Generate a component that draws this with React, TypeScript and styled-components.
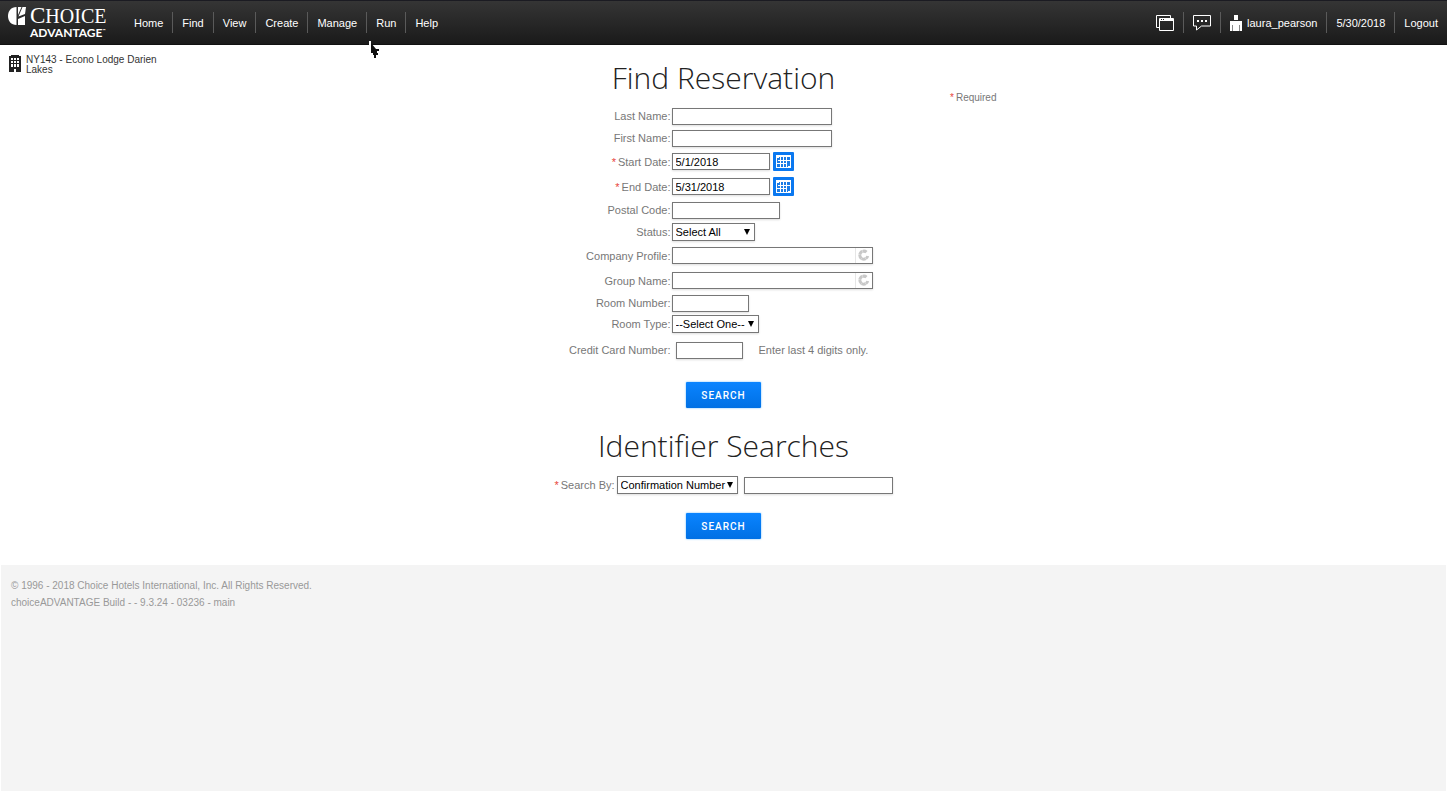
import React from "react";
import styled, { createGlobalStyle } from "styled-components";

const GlobalStyle = createGlobalStyle`
  * { box-sizing: border-box; }
  body {
    margin: 0;
    background: #fff;
    color: #777;
    font-family: "Liberation Sans", Arial, sans-serif;
    font-size: 11px;
    line-height: 14px;
  }
  input, select, button { font-family: inherit; }
`;

const Page = styled.div`
  display: flex;
  flex-direction: column;
  min-height: 100vh;
  position: relative;
`;

const Header = styled.header`
  display: flex;
  align-items: center;
  height: 45px;
  padding: 0 9px 0 8px;
  background: linear-gradient(#353535, #1a1a1a);
  border-top: 1px solid #1b1b22;
  border-bottom: 1px solid #111;
`;

const Logo = styled.a`
  display: flex;
  width: 117px;
  height: 34px;
  gap: 4px;
  color: #fff;
  text-decoration: none;

  svg { margin-top: 1px; }
`;

const LogoWords = styled.span`
  display: flex;
  flex-direction: column;
`;

const LogoTop = styled.span`
  display: block;
  font-family: "Liberation Serif", serif;
  font-size: 20px;
  line-height: 20px;

  &::first-letter { font-size: 23px; }
`;

const LogoBottom = styled.span`
  display: block;
  font-family: Lato, sans-serif;
  font-weight: 700;
  font-size: 12px;
  line-height: 14px;
  white-space: nowrap;

  sup {
    font-size: 4px;
    line-height: 4px;
    vertical-align: 5px;
  }
`;

const NavGroup = styled.nav`
  display: flex;
  align-items: center;
`;

const UserGroup = styled(NavGroup)`
  margin-left: auto;
`;

const NavLink = styled.a`
  display: flex;
  align-items: center;
  gap: 5px;
  height: 21px;
  padding: 0 9px;
  border-left: 1px solid #5a5a5a;
  color: #fff;
  text-decoration: none;
  white-space: nowrap;

  &:first-child { border-left: 0; }
  ${UserGroup} &:last-child { padding-right: 0; }
`;

const Content = styled.div`
  display: grid;
  grid-template-columns: 1fr minmax(0, 546px) 1fr;
`;

const Property = styled.div`
  display: flex;
  align-items: flex-start;
  gap: 5px;
  max-width: 170px;
  padding: 10px 0 0 9px;
  color: #333;
  font-size: 10px;
  line-height: 10px;

  svg { flex: none; }
`;

const Main = styled.main`
  display: flex;
  flex-direction: column;
  padding: 16px 0 26px;
`;

const Title = styled.h1`
  margin: 0;
  color: #222;
  font-family: "Open Sans", sans-serif;
  font-weight: 300;
  font-size: 30px;
  line-height: 34px;
  text-align: center;
`;

const Form = styled.form`
  display: flex;
  flex-direction: column;
`;

const Required = styled.p`
  margin: -4px 0 0;
  height: 14px;
  font-size: 10px;
  text-align: right;
`;

const Star = styled.span`
  margin-right: 2px;
  color: #e8453c;
`;

const Row = styled.div<{ $height: number }>`
  display: flex;
  align-items: center;
  height: ${(p) => p.$height}px;
`;

const Label = styled.label`
  width: 221px;
  padding-right: 1px;
  text-align: right;
`;

const TextBox = styled.input<{ $width: number; $indent?: boolean }>`
  width: ${(p) => p.$width}px;
  height: 17px;
  margin: 0 0 0 ${(p) => (p.$indent ? 4 : 0)}px;
  padding: 0 3px;
  border: 1px solid #777;
  background: #fff;
  color: #000;
  font-size: 11px;
  box-shadow: 0 1px 2px #ddd;
`;

const SelectWrap = styled.span<{ $width: number }>`
  position: relative;
  display: inline-flex;
  width: ${(p) => p.$width}px;

  svg {
    position: absolute;
    top: 6px;
    right: 5px;
    pointer-events: none;
  }
`;

const Select = styled.select`
  appearance: none;
  width: 100%;
  height: 18px;
  margin: 0;
  padding: 0 3px;
  border: 1px solid #777;
  border-radius: 0;
  background: #fff;
  color: #000;
  font-size: 11px;
  box-shadow: 0 1px 2px #ddd;
`;

const LookupWrap = styled.span`
  position: relative;
  display: inline-flex;

  svg {
    position: absolute;
    top: 1px;
    right: 1px;
  }
`;

const CalendarButton = styled.button`
  display: flex;
  margin: 0 0 0 3px;
  padding: 0;
  border: 0;
  background: none;
`;

const Hint = styled.span`
  margin-left: 16px;
`;

const SearchButton = styled.button`
  align-self: center;
  width: 75px;
  height: 26px;
  padding: 0;
  border: 0;
  border-radius: 1px;
  background: linear-gradient(#0a84ff, #0070e4);
  box-shadow: 0 0 2px #5ab4ff;
  color: #fff;
  font-family: Roboto, sans-serif;
  font-weight: 500;
  font-size: 10px;
  letter-spacing: 1px;

  ${Row} + & { margin: 17px 0 21px; }
`;

const IdentifierRow = styled.div`
  display: flex;
  align-items: center;
  justify-content: center;
  height: 20px;
  margin: 12px 0 18px;
  gap: 2px;
`;

const Footer = styled.footer`
  flex: 1;
  margin: 0 1px;
  padding: 12px 10px;
  background: #f4f4f4;
  color: #999;
  font-size: 10px;
  line-height: 17px;

  p { margin: 0; }
`;

const Pointer = styled.svg`
  position: absolute;
  left: 369px;
  top: 41px;
`;

const LogoMark = () => (
  <svg width="18" height="19" viewBox="0 0 18 19" fill="#fff" aria-hidden="true">
    <path d="M8.500 0v18C3 18 0 14 0 9S3 0 8.500 0z" />
    <path d="M10 0h3.500L10 8z" />
    <path d="M14.500 0H18l-1 7-6.500 2.500z" />
    <path d="M17 9v9h-7v-6z" />
  </svg>
);

const WindowsIcon = () => (
  <svg width="18" height="16" viewBox="0 0 18 16" fill="none" stroke="#fff" aria-hidden="true">
    <path d="M3.500 12.500h-3v-12h14v3" />
    <path d="M3.500 3.500h14v12h-14z" />
    <path d="M4 5h13" strokeWidth="2" />
    <path d="M5 4.500h1M7 4.500h1" stroke="#222" />
  </svg>
);

const ChatIcon = () => (
  <svg width="18" height="16" viewBox="0 0 18 16" fill="none" stroke="#fff" aria-hidden="true">
    <path d="M.5 .5h17v10.500H8.500L3.500 15v-4h-3z" />
    <path d="M4 6h2M8 6h2M12 6h2" strokeWidth="2" />
  </svg>
);

const PersonIcon = () => (
  <svg width="12" height="16" viewBox="0 0 12 16" fill="#fff" aria-hidden="true">
    <path d="M4 0h4v5H4zM0 6h12v10H0z" />
    <path d="M2.500 10v6M9.500 10v6" stroke="#888" />
  </svg>
);

const BuildingIcon = () => (
  <svg width="12" height="17" viewBox="0 0 12 17" aria-hidden="true">
    <path d="M2 0h8v1h2v16H7v-3H5v3H0V1h2z" fill="#222" />
    <path
      d="M2 3h2v2H2zM5 3h2v2H5zM8 3h2v2H8zM2 6h2v2H2zM5 6h2v2H5zM8 6h2v2H8zM2 9h2v3H2zM5 9h2v3H5zM8 9h2v3H8z"
      fill="#fff"
    />
  </svg>
);

const CalendarIcon = () => (
  <svg width="21" height="19" viewBox="0 0 21 19" aria-hidden="true">
    <rect width="21" height="19" rx="1" fill="#0a78f0" />
    <rect x="3" y="3" width="15" height="13" fill="#fff" />
    <path d="M4 5h13v10H4z" fill="#1c7ce6" />
    <path
      d="M7.500 5v10M10.500 5v10M13.500 5v10M5 8.500h12M4 11.500h10M4 5.500h2M15 14.500h2"
      stroke="#fff"
    />
  </svg>
);

const Arrow = () => (
  <svg width="6" height="6" viewBox="0 0 6 6" aria-hidden="true">
    <path d="M0 0h6L3 6z" fill="#000" />
  </svg>
);

const Spinner = () => (
  <svg width="17" height="15" viewBox="0 0 17 15" fill="none" aria-hidden="true">
    <path d="M.5 0v15" stroke="#e6e6e6" />
    <path d="M11.500 4.200A4 4 0 1 0 12.700 8" stroke="#c8c8c8" strokeWidth="3" strokeDasharray="4 .3" />
  </svg>
);

type DropDownProps = { id: string; width: number; option: string };

const DropDown = ({ id, width, option }: DropDownProps) => (
  <SelectWrap $width={width}>
    <Select id={id}>
      <option>{option}</option>
    </Select>
    <Arrow />
  </SelectWrap>
);

type FieldProps = {
  id: string;
  label: string;
  height?: number;
  required?: boolean;
  children: React.ReactNode;
};

const Field = ({ id, label, height = 22, required, children }: FieldProps) => (
  <Row $height={height}>
    <Label htmlFor={id}>
      {required && <Star>*</Star>}
      {label}:
    </Label>
    {children}
  </Row>
);

const menu = ["Home", "Find", "View", "Create", "Manage", "Run", "Help"];

export default function App() {
  return (
    <Page>
      <GlobalStyle />
      <Header>
        <Logo href="#">
          <LogoMark />
          <LogoWords>
            <LogoTop>CHOICE</LogoTop>
            <LogoBottom>
              ADVANTAGE<sup>™</sup>
            </LogoBottom>
          </LogoWords>
        </Logo>
        <NavGroup>
          {menu.map((name) => (
            <NavLink key={name} href="#">{name}</NavLink>
          ))}
        </NavGroup>
        <UserGroup>
          <NavLink href="#" aria-label="Windows"><WindowsIcon /></NavLink>
          <NavLink href="#" aria-label="Messages"><ChatIcon /></NavLink>
          <NavLink href="#"><PersonIcon />laura_pearson</NavLink>
          <NavLink href="#">5/30/2018</NavLink>
          <NavLink href="#">Logout</NavLink>
        </UserGroup>
      </Header>

      <Content>
        <Property>
          <BuildingIcon />
          <span>NY143 - Econo Lodge Darien Lakes</span>
        </Property>

        <Main>
          <Title>Find Reservation</Title>
          <Form onSubmit={(e) => e.preventDefault()}>
            <Required><Star>*</Star>Required</Required>
            <Field id="last" label="Last Name"><TextBox id="last" $width={160} /></Field>
            <Field id="first" label="First Name"><TextBox id="first" $width={160} /></Field>
            <Field id="start" label="Start Date" height={25} required>
              <TextBox id="start" $width={98} defaultValue="5/1/2018" />
              <CalendarButton type="button" aria-label="Pick start date"><CalendarIcon /></CalendarButton>
            </Field>
            <Field id="end" label="End Date" height={25} required>
              <TextBox id="end" $width={98} defaultValue="5/31/2018" />
              <CalendarButton type="button" aria-label="Pick end date"><CalendarIcon /></CalendarButton>
            </Field>
            <Field id="postal" label="Postal Code"><TextBox id="postal" $width={108} /></Field>
            <Field id="status" label="Status"><DropDown id="status" width={83} option="Select All" /></Field>
            <Field id="company" label="Company Profile" height={25}>
              <LookupWrap><TextBox id="company" $width={201} /><Spinner /></LookupWrap>
            </Field>
            <Field id="group" label="Group Name" height={25}>
              <LookupWrap><TextBox id="group" $width={201} /><Spinner /></LookupWrap>
            </Field>
            <Field id="room" label="Room Number" height={20}><TextBox id="room" $width={77} /></Field>
            <Field id="type" label="Room Type"><DropDown id="type" width={87} option="--Select One--" /></Field>
            <Field id="card" label="Credit Card Number" height={30}>
              <TextBox id="card" $width={67} $indent />
              <Hint>Enter last 4 digits only.</Hint>
            </Field>
            <SearchButton type="submit">SEARCH</SearchButton>
          </Form>

          <Title as="h2">Identifier Searches</Title>
          <Form onSubmit={(e) => e.preventDefault()}>
            <IdentifierRow>
              <label htmlFor="by"><Star>*</Star>Search By:</label>
              <DropDown id="by" width={121} option="Confirmation Number" />
              <TextBox $width={149} $indent aria-label="Search value" />
            </IdentifierRow>
            <SearchButton type="submit">SEARCH</SearchButton>
          </Form>
        </Main>
      </Content>

      <Footer>
        <p>© 1996 - 2018 Choice Hotels International, Inc. All Rights Reserved.</p>
        <p>choiceADVANTAGE Build - - 9.3.24 - 03236 - main</p>
      </Footer>

      <Pointer width="11" height="18" viewBox="0 0 11 18" aria-hidden="true">
        <path d="M0 0h2v13H0z" fill="#fff" />
        <path d="M2 2l5 6h3v2H8v2h1v2H7v3H5v-3H4v-2H2z" fill="#111" />
      </Pointer>
    </Page>
  );
}
